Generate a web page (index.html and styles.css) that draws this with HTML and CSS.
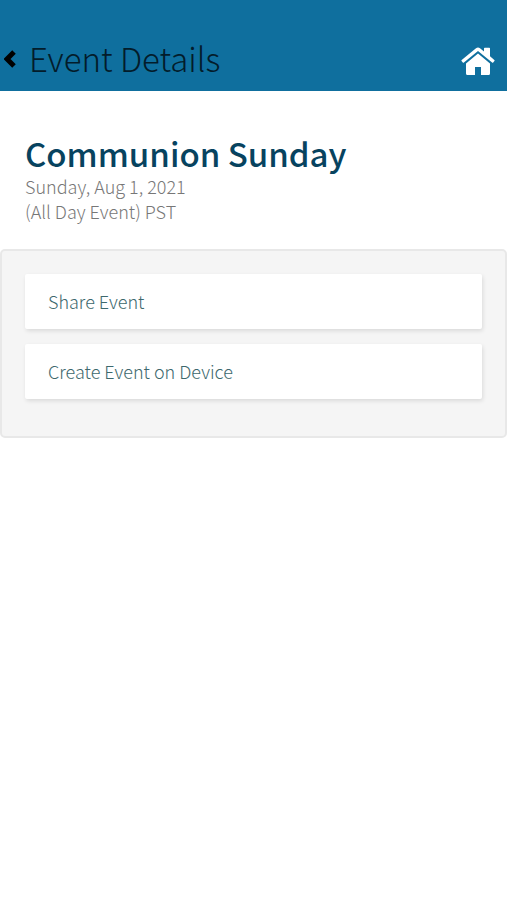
FILE: index.html
```html
<!DOCTYPE html>
<html lang="en">
<head>
<meta charset="utf-8">
<meta name="viewport" content="width=device-width, initial-scale=1">
<title>Event Details</title>
<link rel="stylesheet" href="styles.css">
</head>
<body>
<header class="bar">
  <a class="back" href="#" aria-label="Back"><svg viewBox="0 0 12 18" width="12" height="18"><path d="M10 2 3 9l7 7" fill="none" stroke="currentColor" stroke-width="5"/></svg></a>
  <h1 class="bar-title">Event Details</h1>
  <a class="home" href="#" aria-label="Home"><svg viewBox="0 0 34 28" width="34" height="28"><path fill="currentColor" d="M17 6.500 29 16.500v10q0 1.500-1.500 1.500H20v-8h-6v8H6.500Q5 28 5 26.500v-10zM15 1.200q2-1.600 4 0l4 3.300V1.500q0-.7.700-.7h4.600q.7 0 .7.700V9.200l4.300 3.800q.6.500.1 1.100l-1.200 1.400q-.5.600-1.100.1L17 4 2.900 15.600q-.6.500-1.100-.1L.6 14.100Q.1 13.500.7 13z"/></svg></a>
</header>
<main>
  <section class="summary">
    <h2 class="name">Communion Sunday</h2>
    <p class="when">Sunday, Aug 1, 2021</p>
    <p class="when">(All Day Event) PST</p>
  </section>
  <section class="actions">
    <button class="action" type="button">Share Event</button>
    <button class="action" type="button">Create Event on Device</button>
  </section>
</main>
</body>
</html>
```
FILE: styles.css
```css
* { box-sizing: border-box; }
body { margin: 0; background: #fff; font-family: "Noto Sans CJK SC", "Noto Sans", sans-serif; }
h1, h2, p { margin: 0; }
.bar { display: flex; align-items: center; padding: 30px 12px 3px 4px; background: #0f6f9e; color: #031c2b; }
.back { display: flex; width: 25px; color: #000; }
.bar-title { flex: 1; padding-bottom: 2px; font-size: 33px; line-height: 56px; font-weight: 300; }
.home { display: flex; padding-top: 3px; color: #fff; }
.summary { padding: 41px 25px 25px; }
.name { font-size: 33px; line-height: 42px; font-weight: 500; color: #07435f; }
.when { font-size: 18px; line-height: 25px; font-weight: 300; color: #777; }
.actions { display: flex; flex-direction: column; gap: 15px; padding: 23px 23px 37px; background: #f5f5f5; border: 2px solid #e8e8e8; border-radius: 5px; }
.action { height: 55px; padding: 0 23px 1px; border: 0; border-radius: 2px; background: #fff; box-shadow: 1px 2px 4px #0000001c; text-align: left; font: 300 18px/26px "Noto Sans CJK SC", "Noto Sans", sans-serif; color: #3d686d; }
```
